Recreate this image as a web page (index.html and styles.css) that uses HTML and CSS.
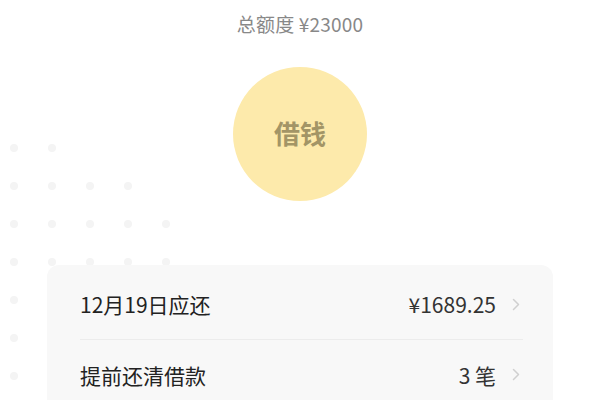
FILE: index.html
```html
<!DOCTYPE html>
<html lang="zh-CN">
<head>
    <meta charset="UTF-8">
    <meta name="viewport" content="width=device-width, initial-scale=1.0">
    <title>借钱</title>
    <link rel="stylesheet" href="styles.css">
</head>
<body>
    <svg class="dots" width="200" height="400" viewBox="0 0 200 400">
        <g fill="#f4f4f4">
            <circle cx="14" cy="148" r="4"/><circle cx="52" cy="148" r="4"/>
            <circle cx="14" cy="186" r="4"/><circle cx="52" cy="186" r="4"/><circle cx="90" cy="186" r="4"/><circle cx="128" cy="186" r="4"/>
            <circle cx="14" cy="224" r="4"/><circle cx="52" cy="224" r="4"/><circle cx="90" cy="224" r="4"/><circle cx="128" cy="224" r="4"/><circle cx="166" cy="224" r="4"/>
            <circle cx="14" cy="262" r="4"/><circle cx="52" cy="262" r="4"/><circle cx="90" cy="262" r="4"/><circle cx="128" cy="262" r="4"/><circle cx="166" cy="262" r="4"/>
            <circle cx="14" cy="300" r="4"/>
            <circle cx="14" cy="338" r="4"/>
            <circle cx="14" cy="376" r="4"/>
        </g>
    </svg>

    <main class="page">
        <p class="limit">总额度 ¥23000</p>

        <div class="borrow">借钱</div>

        <div class="card">
            <div class="row">
                <span class="label">12月19日应还</span>
                <span class="value">¥1689.25</span>
                <svg class="chev" width="8" height="13" viewBox="0 0 8 13"><path d="M1.5 1.5l5 5-5 5" fill="none" stroke="#d0d0d0" stroke-width="1.5" stroke-linecap="round" stroke-linejoin="round"/></svg>
            </div>
            <div class="row">
                <span class="label">提前还清借款</span>
                <span class="value">3 笔</span>
                <svg class="chev" width="8" height="13" viewBox="0 0 8 13"><path d="M1.5 1.5l5 5-5 5" fill="none" stroke="#d0d0d0" stroke-width="1.5" stroke-linecap="round" stroke-linejoin="round"/></svg>
            </div>
        </div>
    </main>
</body>
</html>
```

FILE: styles.css
```css
* {
    margin: 0;
    padding: 0;
    box-sizing: border-box;
}
body {
    font-family: "Noto Sans CJK SC", "Noto Sans", sans-serif;
    background-color: #fff;
    color: #222;
    width: 600px;
    height: 400px;
    overflow: hidden;
    position: relative;
}
.dots {
    position: absolute;
    left: 0;
    top: 0;
    z-index: 0;
}
.page {
    position: relative;
    z-index: 1;
    display: flex;
    flex-direction: column;
    align-items: center;
    padding-top: 10px;
}
.limit {
    font-size: 19px;
    line-height: 27px;
    color: #888;
    letter-spacing: 0.2px;
}
.borrow {
    margin-top: 30px;
    width: 134px;
    height: 134px;
    border-radius: 50%;
    background-color: #fdeaab;
    color: #a39566;
    font-size: 26px;
    font-weight: bold;
    display: flex;
    align-items: center;
    justify-content: center;
    padding-bottom: 4px;
}
.card {
    margin-top: 64px;
    width: 506px;
    background-color: #f8f8f8;
    border-radius: 12px;
    padding: 0 30px 0 33px;
}
.row {
    display: flex;
    align-items: center;
    height: 75px;
    font-size: 21px;
    border-bottom: 1px solid #ececec;
}
.row:first-child {
    padding-top: 4px;
}
.row:last-child {
    border-bottom: none;
    padding-bottom: 6px;
}
.label {
    flex: 1;
    color: #222;
}
.value {
    color: #333;
}
.chev {
    margin-left: 16px;
    margin-right: 3px;
}
```
